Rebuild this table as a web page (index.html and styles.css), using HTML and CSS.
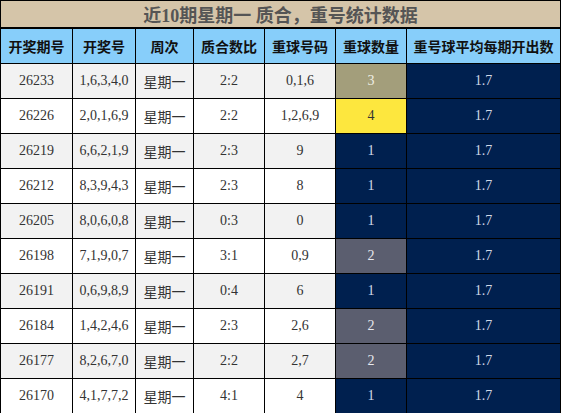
FILE: index.html
```html
<!DOCTYPE html>
<html lang="zh">
<head>
    <meta charset="UTF-8">
    <title>近10期星期一 质合，重号统计数据</title>
    <link rel="stylesheet" href="styles.css">
</head>
<body>
    <table class="stats">
        <colgroup>
            <col class="c-issue">
            <col class="c-nums">
            <col class="c-week">
            <col class="c-ratio">
            <col class="c-rep">
            <col class="c-count">
            <col class="c-avg">
        </colgroup>
        <thead>
            <tr class="title-row"><th colspan="7">近10期星期一 质合，重号统计数据</th></tr>
            <tr class="head-row">
                <th>开奖期号</th>
                <th>开奖号</th>
                <th>周次</th>
                <th>质合数比</th>
                <th>重球号码</th>
                <th>重球数量</th>
                <th>重号球平均每期开出数</th>
            </tr>
        </thead>
        <tbody>
            <tr><td>26233</td><td>1,6,3,4,0</td><td>星期一</td><td>2:2</td><td>0,1,6</td><td class="cnt cnt-3">3</td><td class="avg">1.7</td></tr>
            <tr><td>26226</td><td>2,0,1,6,9</td><td>星期一</td><td>2:2</td><td>1,2,6,9</td><td class="cnt cnt-4">4</td><td class="avg">1.7</td></tr>
            <tr><td>26219</td><td>6,6,2,1,9</td><td>星期一</td><td>2:3</td><td>9</td><td class="cnt cnt-1">1</td><td class="avg">1.7</td></tr>
            <tr><td>26212</td><td>8,3,9,4,3</td><td>星期一</td><td>2:3</td><td>8</td><td class="cnt cnt-1">1</td><td class="avg">1.7</td></tr>
            <tr><td>26205</td><td>8,0,6,0,8</td><td>星期一</td><td>0:3</td><td>0</td><td class="cnt cnt-1">1</td><td class="avg">1.7</td></tr>
            <tr><td>26198</td><td>7,1,9,0,7</td><td>星期一</td><td>3:1</td><td>0,9</td><td class="cnt cnt-2">2</td><td class="avg">1.7</td></tr>
            <tr><td>26191</td><td>0,6,9,8,9</td><td>星期一</td><td>0:4</td><td>6</td><td class="cnt cnt-1">1</td><td class="avg">1.7</td></tr>
            <tr><td>26184</td><td>1,4,2,4,6</td><td>星期一</td><td>2:3</td><td>2,6</td><td class="cnt cnt-2">2</td><td class="avg">1.7</td></tr>
            <tr><td>26177</td><td>8,2,6,7,0</td><td>星期一</td><td>2:2</td><td>2,7</td><td class="cnt cnt-2">2</td><td class="avg">1.7</td></tr>
            <tr><td>26170</td><td>4,1,7,7,2</td><td>星期一</td><td>4:1</td><td>4</td><td class="cnt cnt-1">1</td><td class="avg">1.7</td></tr>
        </tbody>
    </table>
</body>
</html>
```

FILE: styles.css
```css
body {
    margin: 0;
    background-color: #ffffff;
    font-family: "Liberation Serif", "Noto Sans CJK SC", serif;
}
.stats {
    border-collapse: collapse;
    table-layout: fixed;
    width: 560px;
}
.c-issue { width: 72px; }
.c-nums { width: 63px; }
.c-week { width: 58px; }
.c-ratio { width: 71px; }
.c-rep { width: 71px; }
.c-count { width: 71px; }
.c-avg { width: 154px; }
.stats th,
.stats td {
    border: 1px solid #000;
    padding: 0;
    text-align: center;
    white-space: nowrap;
    overflow: hidden;
}
.title-row th {
    height: 26px;
    background-color: #d5c5a9;
    color: #555;
    font-size: 18px;
    font-weight: bold;
    border-bottom-width: 2px;
}
.head-row th {
    height: 34px;
    background-color: #87cefa;
    color: #111;
    font-family: "Noto Sans CJK SC", sans-serif;
    font-size: 14px;
    font-weight: bold;
}
.stats td {
    height: 34px;
    font-size: 14px;
    color: #333;
}
.stats tbody tr:nth-child(odd) td {
    background-color: #f2f2f2;
}
.stats tbody tr:nth-child(even) td {
    background-color: #ffffff;
}
.stats tbody tr td.cnt-1,
.stats tbody tr td.avg {
    background-color: #00204f;
    color: #d0d8e6;
}
.stats tbody tr td.cnt-2 {
    background-color: #5b5e6f;
    color: #e8e8ee;
}
.stats tbody tr td.cnt-3 {
    background-color: #a39e7b;
    color: #f0eee4;
}
.stats tbody tr td.cnt-4 {
    background-color: #fde73e;
    color: #333;
}
```
